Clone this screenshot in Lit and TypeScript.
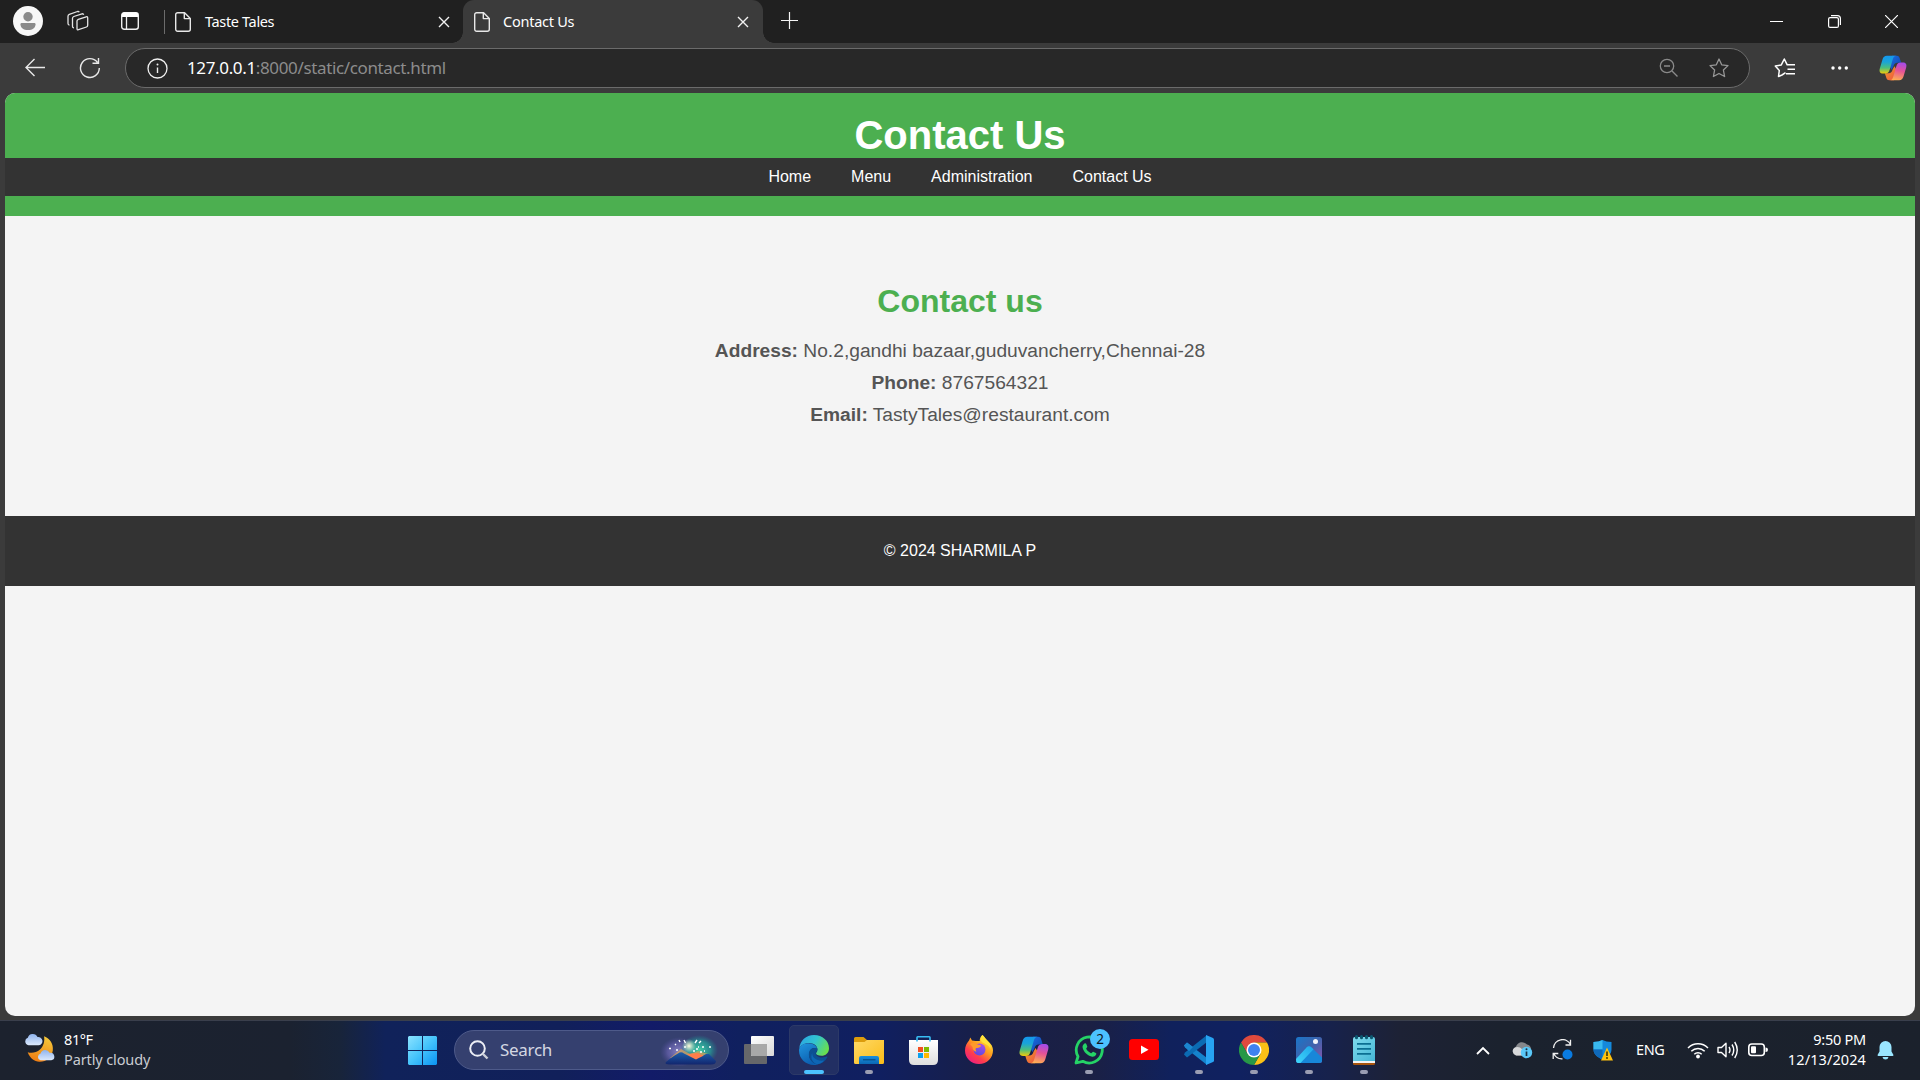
import { LitElement, html, css, svg } from "lit";
import { customElement } from "lit/decorators.js";

const icon = (w: number, h: number, body: unknown, cls = "") =>
  html`<svg class=${cls} width=${w} height=${h} viewBox="0 0 ${w} ${h}" fill="none">${body}</svg>`;

const pageIcon = () =>
  icon(18, 22, svg`<path d="M4 1.700H10.600L16.300 7.400V18.300a2 2 0 0 1-2 2H3.700a2 2 0 0 1-2-2V3.700a2 2 0 0 1 2-2ZM10.300 2V7.600H16" stroke="#e8e8e8" stroke-width="1.400" stroke-linejoin="round"/>`);

const crossIcon = () =>
  icon(12, 12, svg`<path d="M1 1L11 11M11 1L1 11" stroke="#f2f2f2" stroke-width="1.400"/>`);

const copilot = (w: number, h: number, k: string) => html`<svg width=${w} height=${h} viewBox="0 0 30 28" fill="none">
  <defs>
    <linearGradient id="l${k}" x1="0" y1="0" x2="0" y2="1"><stop stop-color="#1497ee"/><stop offset=".35" stop-color="#1aa4d8"/><stop offset=".68" stop-color="#4cbf7c"/><stop offset="1" stop-color="#f3cc08"/></linearGradient>
    <linearGradient id="r${k}" x1=".6" y1="0" x2=".4" y2="1"><stop stop-color="#a54be8"/><stop offset=".45" stop-color="#e55297"/><stop offset="1" stop-color="#ffae52"/></linearGradient>
    <linearGradient id="t${k}" x1="0" y1="0" x2="1" y2="1"><stop stop-color="#1a6fe8"/><stop offset="1" stop-color="#1244a8"/></linearGradient>
    <linearGradient id="b${k}" x1="0" y1="0" x2="1" y2="1"><stop stop-color="#f0a028"/><stop offset="1" stop-color="#ef4d43"/></linearGradient>
  </defs>
  <path d="M14 .8h5c2 0 2.800 1.200 3.400 3.200l1.400 4.400h-4c-2.600 0-3.600 1.200-4.400 4l-2 3.600L10 10Z" fill="url(#t${k})"/>
  <path d="M16 27.200h-5c-2 0-2.800-1.200-3.400-3.200L6.200 19.600h4c2.600 0 3.600-1.200 4.400-4l2-3.600L20 18Z" fill="url(#b${k})"/>
  <path d="M8.400 .8H18.400C16 1 15.300 2.800 14.600 5.200L11.400 16C10.500 19 9 20 6.500 20H4C.8 20 0 17.500 .8 14.600L3.600 5C4.500 2 6 .8 8.400 .8Z" fill="url(#l${k})"/>
  <path d="M21.600 27.200H11.600C14 27 14.700 25.200 15.400 22.800L18.600 12C19.500 9 21 8 23.500 8H26C29.200 8 30 10.500 29.200 13.400L26.400 23C25.500 26 24 27.200 21.600 27.200Z" fill="url(#r${k})"/>
</svg>`;

const weatherIcon = icon(30, 28, svg`
  <defs>
    <linearGradient id="moon" x1=".6" y1="0" x2=".3" y2="1"><stop stop-color="#f5c73a"/><stop offset="1" stop-color="#ee7c12"/></linearGradient>
    <linearGradient id="cld" x1="0" y1="0" x2="0" y2="1"><stop stop-color="#8fb4ee"/><stop offset="1" stop-color="#dce9fc"/></linearGradient>
  </defs>
  <path d="M19 2.300C25 4.500 28.600 10 27.800 16.500C26.800 23.500 21 28 14.300 27.700C9.500 27.400 5 24.500 2.700 18.200C6.500 19.500 11.500 18.700 15 15.500C18.600 12.200 20 7 19 2.300Z" fill="url(#moon)"/>
  <path d="M3.500 11.300A3.900 3.900 0 0 1 2.800 3.800 5.200 5.200 0 0 1 12.500 3 4.200 4.200 0 0 1 14 11.300Z" fill="url(#cld)"/>
  <path d="M15.500 26.300A3.600 3.600 0 0 1 15.600 19.400 4.900 4.900 0 0 1 24.600 18.800 3.800 3.800 0 0 1 26.300 26.300Z" fill="url(#cld)"/>`);

const startIcon = icon(29, 29, svg`
  <defs><linearGradient id="win" gradientUnits="userSpaceOnUse" x1="0" y1="0" x2="29" y2="29"><stop stop-color="#8ce3ff"/><stop offset=".5" stop-color="#44c3fb"/><stop offset="1" stop-color="#0a93f3"/></linearGradient></defs>
  <path d="M1 0H14V14H0V1ZM15 0H28L29 1V14H15ZM0 15H14V29H1L0 28ZM15 15H29V28L28 29H15Z" fill="url(#win)"/>`);

const searchArt = icon(58, 32, svg`
  <defs>
    <radialGradient id="g1"><stop stop-color="#a99de0" stop-opacity=".75"/><stop offset=".6" stop-color="#7c70c8" stop-opacity=".5"/><stop offset="1" stop-color="#5a50a8" stop-opacity="0"/></radialGradient>
    <radialGradient id="g2"><stop stop-color="#45d0a8"/><stop offset=".6" stop-color="#25a098" stop-opacity=".75"/><stop offset="1" stop-color="#208090" stop-opacity="0"/></radialGradient>
    <radialGradient id="g3"><stop stop-color="#fffbe0"/><stop offset="1" stop-color="#d8f0c8" stop-opacity="0"/></radialGradient>
    <linearGradient id="g4" x1="0" y1="0" x2="0" y2="1"><stop stop-color="#1d5fac"/><stop offset="1" stop-color="#12266e"/></linearGradient>
  </defs>
  <ellipse cx="19" cy="18" rx="19" ry="15" fill="url(#g1)"/>
  <ellipse cx="39" cy="16" rx="19" ry="15" fill="url(#g2)"/>
  <path d="M10 24L21 15 30 20 38 17 48 20 40 28 30 28Z" fill="#d3a15c" opacity=".75"/>
  <path d="M27 20L38 19 44 22 36 27Z" fill="#ff7d4a"/>
  <circle cx="29" cy="12" r="7" fill="url(#g3)"/>
  <path d="M6 28C10 24.500 14 21.500 18 19.500Q21 17 24 19.500L36 25.500Q43 22 46 20L49 20 56 27Q56 30.500 51 30.500H10Q4 30.500 6 28Z" fill="url(#g4)"/>
  <path d="M9 14.500h2M15 10l1 1M19 6l1 2M24 6l1.500 3M35 9l2-3M39 9l2-2M42 13h2M49 13h2M16 16h2M24 13h2M36 15h2M40 18h2M44 17h1M38 13h1M33 17h2" stroke="#fff" stroke-width="1.400"/>`);

const apps: { name: string; art: unknown; run?: boolean; active?: boolean; badge?: string }[] = [
  {
    name: "Task view",
    art: icon(30, 30, svg`
      <defs><linearGradient id="tv" x1="0" y1="0" x2="1" y2="1"><stop stop-color="#fff"/><stop offset="1" stop-color="#d8d8d8"/></linearGradient></defs>
      <rect y="9" width="23" height="20" rx="1" fill="#66676a"/><rect x="7" y="1" width="23" height="20" rx="1" fill="url(#tv)"/><path d="M7 9H23V21H8a1 1 0 0 1-1-1Z" fill="#a8a8a8"/>`),
  },
  {
    name: "Edge", run: true, active: true,
    art: icon(30, 30, svg`
      <defs>
        <linearGradient id="e1" x1="0" y1=".2" x2="1" y2=".6"><stop stop-color="#2ba5e4"/><stop offset=".5" stop-color="#31c4d0"/><stop offset="1" stop-color="#6adf4c"/></linearGradient>
        <linearGradient id="e2" x1="0" y1="0" x2=".5" y2="1"><stop stop-color="#2196df"/><stop offset="1" stop-color="#0b5fb0"/></linearGradient>
      </defs>
      <path d="M.3 13.500C1 5.500 7 0 15 0C23.500 0 30 6 30 13.200C30 18 26.500 20.800 22.500 20.800C19 20.800 17 19.500 17 18.300C17 17.500 18.500 17 18.500 14.500C18.500 10.800 14.500 8 10 8C5 8 1.500 10.500 .3 13.500Z" fill="url(#e1)"/>
      <path d="M0 15.500C0 11.500 4 8.200 9 8.200C14 8.200 18.200 11 18.400 14.500C16 11.700 11 13 10.200 18.500C9.500 24 14 28.500 19 29.400C17.700 29.800 16.500 30 15 30C6.500 30 0 23.500 0 15.500Z" fill="url(#e2)"/>
      <path d="M10 17.500C11 13.500 14.500 12.200 18.200 13.500C18.700 16.500 16.700 17 16.700 18.500C16.700 20.500 19.500 22.500 23.300 22.500C25.500 22.500 26.800 21.700 27.500 21.500C28.300 21.300 28.600 21.800 28.200 22.500C26 26.500 22.500 29 18.500 29.400C13 28.500 9 23.500 10 17.500Z" fill="#0c4f93"/>
      <path d="M13.200 18C13 22.500 17.500 26.500 25 25.500C23.500 27.500 21 29 18.500 29.300C13.500 28 11 23 13.200 18Z" fill="#0d66b5"/>`),
  },
  {
    name: "File Explorer", run: true,
    art: icon(30, 30, svg`
      <defs><linearGradient id="fx" x1="0" y1="0" x2="1" y2="1"><stop stop-color="#ffd966"/><stop offset="1" stop-color="#fbbc18"/></linearGradient><linearGradient id="fb" x1="0" y1="0" x2="0" y2="1"><stop stop-color="#1a8fdf"/><stop offset="1" stop-color="#0b67b4"/></linearGradient></defs>
      <path d="M0 3.500Q0 2 1.500 2H9.500L13 5H28.500Q30 5 30 6.500V10H0Z" fill="#dc9c0c"/>
      <path d="M0 7H10.500L13 5H30V27.500Q30 29 28.500 29H1.500Q0 29 0 27.500Z" fill="url(#fx)"/>
      <path d="M5 29V23Q5 21 7 21H23Q25 21 25 23V29Z" fill="url(#fb)"/><path d="M9 24.800H21.500" stroke="#084b86" stroke-width="1.200"/>`),
  },
  {
    name: "Store",
    art: icon(30, 30, svg`
      <defs><linearGradient id="st" x1="0" y1="0" x2="0" y2="1"><stop stop-color="#fff"/><stop offset="1" stop-color="#dedede"/></linearGradient></defs>
      <path d="M0 5H29V25Q29 30 24 30H5Q0 30 0 25Z" fill="url(#st)"/>
      <path d="M8 6.500V2.500Q8 1.800 8.700 1.800H20.300Q21 1.800 21 2.500V6.500" stroke="#38bdf3" stroke-width="1.600"/>
      <path d="M9 12H14V17H9Z" fill="#f25022"/><path d="M15 12H20V17H15Z" fill="#7fba00"/><path d="M9 18H14V23H9Z" fill="#0aa0ee"/><path d="M15 18H20V23H15Z" fill="#ffb900"/>`),
  },
  {
    name: "Firefox",
    art: icon(30, 30, svg`
      <defs>
        <linearGradient id="f1" x1=".8" y1=".1" x2=".2" y2=".95"><stop stop-color="#ffe838"/><stop offset=".4" stop-color="#ff9a1f"/><stop offset=".7" stop-color="#ff3d4c"/><stop offset="1" stop-color="#ed1f80"/></linearGradient>
        <linearGradient id="f2" x1=".7" y1="0" x2=".3" y2="1"><stop stop-color="#a94de8"/><stop offset="1" stop-color="#5a4be0"/></linearGradient>
      </defs>
      <path d="M18.500 0C20.500 2 22 4.500 24 6.200C27.500 9 29 12 29 15.200C29 23 23 29 15 29C7 29 1 23 1 15.500C1 11 2.800 8 5.200 5.200L6.300 2.500 8 5.500 11.500 6 15.800 6C15.500 3.500 16.500 1.500 18.500 0Z" fill="url(#f1)"/>
      <circle cx="15.500" cy="14.500" r="6" fill="url(#f2)"/>
      <path d="M6 9C8 7.500 11.500 8 13.500 9.500L17 10.300C17 12 15 13 13 13C11 13 11.500 15 12.500 16.500C9.500 16.500 8.500 14 8.600 12Z" fill="#ff9a2c"/>
      <path d="M18.500 0C20.500 2 22 4.500 24 6.200C26 8 27 10 26.500 14C25 10 21 9 18.500 7.500C16 5.500 16.500 2 18.500 0Z" fill="#ffe23a"/>`),
  },
  { name: "Copilot", art: copilot(30, 28, "b") },
  {
    name: "WhatsApp", run: true, badge: "2",
    art: icon(30, 30, svg`
      <path d="M2 28L4 21.500A13 13 0 1 1 8.800 26.300Z" stroke="#25d366" stroke-width="2.800" stroke-linejoin="round"/>
      <path d="M10.500 8.500C11.300 8 12 8.300 12.300 9L13.300 11.500C13.500 12.200 12 13.300 12.200 13.800C13.200 15.800 14.800 17.300 17 18.200C17.700 18.400 18.600 16.500 19.300 16.800L21.800 18C22.500 18.400 22.400 19 22 19.800C21.300 21.400 19.200 22 17.500 21.500C13 20.300 9.800 17 8.700 13C8.200 11.300 8.900 9.500 10.500 8.500Z" fill="#25d366"/>`),
  },
  {
    name: "YouTube",
    art: icon(30, 30, svg`<rect y="4" width="30" height="21" rx="3.500" fill="#f00"/><path d="M12 10.500V19L19.500 14.750Z" fill="#fff"/>`),
  },
  {
    name: "VS Code", run: true,
    art: icon(30, 30, svg`
      <path d="M0 10.500L3 7.500 23 23V30L1 12.500Z" fill="#1583cc"/><path d="M0 19.500L3 22.500 23 7V0L1 17.500Z" fill="#0b6bb3"/>
      <path d="M0 10.500L3 7.500 9 12 5 16.200Z" fill="#1c86cf"/>
      <path d="M22 0L29 3Q30 3.500 30 4.500V25.500Q30 26.500 29 27L22 30Z" fill="#27a3f2"/>`),
  },
  {
    name: "Chrome", run: true,
    art: icon(30, 30, svg`
      <path d="M2 7.500A15 15 0 0 1 28 7.500H15L8.500 18.700Z" fill="#df4a3d"/>
      <path d="M28 7.500A15 15 0 0 1 15 30L21.500 18.700 15 7.500Z" fill="#fbc116"/>
      <path d="M15 30A15 15 0 0 1 2 7.500L8.500 18.700 15 22.500 21.500 18.700Z" fill="#279847"/>
      <circle cx="15" cy="15" r="7.500" fill="#fff"/><circle cx="15" cy="15" r="6" fill="#3e82f0"/>`),
  },
  {
    name: "Photos", run: true,
    art: icon(30, 30, svg`
      <defs>
        <linearGradient id="p1" x1="0" y1="0" x2="1" y2="1"><stop stop-color="#1976c9"/><stop offset=".5" stop-color="#3f62ac"/><stop offset="1" stop-color="#8d55ad"/></linearGradient>
        <linearGradient id="p2" x1="0" y1="1" x2="1" y2="0"><stop stop-color="#3fd6fb"/><stop offset="1" stop-color="#1fa6ea"/></linearGradient>
      </defs>
      <rect x="2" y="2" width="26" height="26" rx="2.500" fill="url(#p1)"/>
      <path d="M2.700 27L13 12Q15 10.300 17 12L28 22.500V25.500Q28 28 25.500 28H4.500Q3 28 2.700 27Z" fill="#1787d9"/>
      <path d="M2.300 26.800L2 24 13 12Q15 10.300 17 12L19.500 14.300 6.500 28H4.500Q3 28 2.300 26.800Z" fill="url(#p2)"/>
      <circle cx="21.500" cy="6.500" r="2.500" fill="#f1f4fb"/>`),
  },
  {
    name: "Notepad", run: true,
    art: icon(30, 30, svg`
      <defs><linearGradient id="np" x1="0" y1="0" x2="1" y2="1"><stop stop-color="#7fdcee"/><stop offset="1" stop-color="#45b6d6"/></linearGradient></defs>
      <path d="M4 26H26V28.500Q26 30 24.500 30H5.500Q4 30 4 28.500Z" fill="#a8540c"/><path d="M4 24H26V28H4Z" fill="#f3f3f3"/><path d="M4 4Q4 2 6 2H24Q26 2 26 4V26H4Z" fill="url(#np)"/>
      <path d="M8 8.800H22M8 13.800H22M8 18.800H22" stroke="#0b6f92" stroke-width="1.800"/>
      <path d="M7.500 1.500V2.800M12.500 1.500V2.800M17.500 1.500V2.800M22.500 1.500V2.800" stroke="#0c5870" stroke-width="3" stroke-linecap="round"/>`),
  },
];

@customElement("browser-chrome")
class BrowserChrome extends LitElement {
  static styles = css`
    :host { display: block; font-family: "Noto Sans", "Open Sans", sans-serif; color: #fff; background: #3b3b3b; }
    svg { display: block; flex: none; }
    .strip { height: 43px; box-sizing: border-box; background: #202020; display: flex; align-items: center; padding-left: 13px; }
    .strip > svg { margin-bottom: 1px; }
    .workspaces { margin-left: 24px; }
    .actions { margin-left: 31px; }
    .sep { width: 1px; height: 24px; margin-left: 24px; background: #6c6c6c; }
    .tab { height: 43px; box-sizing: border-box; display: flex; align-items: center; font-size: 14.5px; letter-spacing: -0.3px; }
    .tab span { flex: 1; margin: -2px 0 0 13px; }
    .first { width: 298px; padding: 0 13px 0 9px; letter-spacing: -0.35px; }
    .current { width: 300px; padding: 0 14px 0 10px; background: #3b3b3b; border-radius: 11px 11px 0 0; position: relative; }
    .current span { margin-left: 12px; letter-spacing: -0.25px; }
    .current::before, .current::after { content: ""; position: absolute; bottom: 0; width: 11px; height: 11px; }
    .current::before { left: -11px; background: radial-gradient(circle at 0 0, transparent 10.5px, #3b3b3b 11px); }
    .current::after { right: -11px; background: radial-gradient(circle at 100% 0, transparent 10.5px, #3b3b3b 11px); }
    .plus { margin-left: 17px; }
    .controls { margin-left: auto; padding-right: 22px; display: flex; gap: 44.500px; align-items: center; }
    .bar { height: 50px; display: flex; align-items: center; padding-left: 24px; }
    .reload { margin-left: 33px; }
    .url { flex: none; margin-left: 24px; width: 1625px; height: 40px; box-sizing: border-box; border: 1px solid #6b6b6b; border-radius: 20px; background: #282828; display: flex; align-items: center; padding: 0 20px 0 21px; font-size: 17px; letter-spacing: -0.36px; color: #8c8c8c; }
    .url b { font-weight: 400; color: #fff; }
    .address { flex: 1; margin: -2px 0 0 19px; }
    .star { margin-left: 30px; }
    .fav { margin-left: 24px; }
    .dots { margin-left: 35px; }
    .copilot { margin: 0 0 0 30px; }
  `;
  render() {
    return html`
      <div class="strip">
        ${icon(30, 30, svg`<circle cx="15" cy="15" r="15" fill="#f7f7f7"/><circle cx="15" cy="10.700" r="4.700" fill="#8a8a8a"/><path d="M8.500 17H21.500Q22.500 17 22.500 18.200C22.500 21.800 19.500 24 15 24S7.500 21.800 7.500 18.200Q7.500 17 8.500 17Z" fill="#8a8a8a"/>`)}
        ${icon(22, 22, svg`<g stroke="#e4e4e4" stroke-width="1.300" stroke-linejoin="round"><path d="M11.300 9.300Q10 9.800 10 11V18.500Q10 20.200 11.500 19.700L19.500 17Q20.700 16.600 20.700 15.300V8Q20.700 6.300 19.200 6.800Z"/><path d="M7 17.800Q5.500 17.800 5.500 16.200V8.300Q5.500 7 6.800 6.500L15 3.800Q16.300 3.500 16.700 4.800"/><path d="M2.500 15.200Q1 15 1 13.500V6.200Q1 4.800 2.300 4.300L10.500 1.500Q11.800 1.200 12.200 2.300"/></g>`, "workspaces")}
        ${icon(20, 20, svg`<rect x="1.700" y="1.700" width="16.600" height="16.600" rx="2.500" stroke="#f0f0f0" stroke-width="1.400"/><path d="M2 3Q2 1.500 4 1.500H16Q18 1.500 18 3V6H2Z" fill="#fff"/><path d="M6.500 6V18" stroke="#f0f0f0" stroke-width="1.300"/>`, "actions")}
        <div class="sep"></div>
        <div class="tab first">${pageIcon()}<span>Taste Tales</span>${crossIcon()}</div>
        <div class="tab current">${pageIcon()}<span>Contact Us</span>${crossIcon()}</div>
        ${icon(18, 18, svg`<path d="M9.500 0V17M1 8.500H18" stroke="#f5f5f5" stroke-width="1.200"/>`, "plus")}
        <div class="controls">
          ${icon(13, 13, svg`<path d="M0 6.500H13" stroke="#fff" stroke-width="1"/>`)}
          ${icon(13, 13, svg`<rect x=".6" y="2.600" width="9.800" height="9.800" rx="1.500" stroke="#fff" stroke-width="1.200"/><path d="M3 .6H9.500Q12.400 .6 12.400 3.500V10" stroke="#fff" stroke-width="1.200"/>`)}
          ${icon(13, 13, svg`<path d="M0 0L13 13M13 0L0 13" stroke="#fff" stroke-width="1.200"/>`)}
        </div>
      </div>
      <div class="bar">
        ${icon(22, 22, svg`<path d="M21 10.500H2M10.500 2L2 10.500 10.500 19" stroke="#e8e8e8" stroke-width="1.400"/>`)}
        ${icon(22, 22, svg`<path d="M18.500 5.500A9.400 9.400 0 1 0 20.300 11M19.500 1V6.300H13.500" stroke="#e8e8e8" stroke-width="1.400"/>`, "reload")}
        <div class="url">
          ${icon(21, 21, svg`<circle cx="10.500" cy="10.500" r="9.500" stroke="#f0f0f0" stroke-width="1.300"/><path d="M10.500 9.500V15" stroke="#f0f0f0" stroke-width="1.400"/><circle cx="10.500" cy="6.500" r="1" fill="#f0f0f0"/>`)}
          <span class="address"><b>127.0.0.1</b>:8000/static/contact.html</span>
          ${icon(20, 20, svg`<circle cx="8" cy="8" r="6.700" stroke="#8a8a8a" stroke-width="1.300"/><path d="M5 8H11M13 13L18.500 18.500" stroke="#8a8a8a" stroke-width="1.400"/>`)}
          ${icon(20, 20, svg`<path d="M10 1L12.700 6.800 19 7.600 14.400 12 15.600 18.500 10 15.500 4.400 18.500 5.600 12 1 7.600 7.300 6.800Z" stroke="#979797" stroke-width="1.300" stroke-linejoin="round"/>`, "star")}
        </div>
        ${icon(22, 22, svg`<path d="M8 18L4.500 19.500 5.300 13.500 1.300 9 7.300 7.900 10.300 2 13.200 7.800H21M13.500 12.300H21M12 16.800H21M8 18L11.500 15.700" stroke="#fff" stroke-width="1.500" stroke-linejoin="round"/>`, "fav")}
        ${icon(18, 4, svg`<circle cx="2" cy="2" r="1.700" fill="#fff"/><circle cx="8.700" cy="2" r="1.700" fill="#fff"/><circle cx="15.300" cy="2" r="1.700" fill="#fff"/>`, "dots")}
        <div class="copilot">${copilot(28, 26, "a")}</div>
      </div>
    `;
  }
}

@customElement("contact-page")
class ContactPage extends LitElement {
  static styles = css`
    :host { display: block; background: #f4f4f4; font-family: Arial, "Liberation Sans", sans-serif; text-align: center; border-radius: 10px; overflow: hidden; }
    .head { background: #4caf50; padding: 20px 0; color: #fff; }
    h1 { margin: 0; font-size: 40px; line-height: 45px; }
    nav { background: #333; padding: 10px 0; display: flex; justify-content: center; gap: 40px; font-size: 16px; line-height: 18px; }
    .info { height: 300px; box-sizing: border-box; padding-top: 67px; color: #555; }
    h2 { margin: 0 0 15px; font-size: 32px; line-height: 37px; color: #4caf50; }
    p { margin: 0; font-size: 19.2px; line-height: 32px; }
    footer { height: 70px; background: #333; color: #fff; display: flex; align-items: center; justify-content: center; font-size: 16px; line-height: 18px; }
  `;
  render() {
    return html`
      <div class="head">
        <h1>Contact Us</h1>
        <nav><span>Home</span><span>Menu</span><span>Administration</span><span>Contact Us</span></nav>
      </div>
      <div class="info">
        <h2>Contact us</h2>
        <p><strong>Address:</strong> No.2,gandhi bazaar,guduvancherry,Chennai-28</p>
        <p><strong>Phone:</strong> 8767564321</p>
        <p><strong>Email:</strong> TastyTales@restaurant.com</p>
      </div>
      <footer>© 2024 SHARMILA P</footer>
    `;
  }
}

@customElement("task-bar")
class TaskBar extends LitElement {
  static styles = css`
    :host { display: flex; align-items: center; height: 60px; box-sizing: border-box; padding-bottom: 1px; border-top: 1px solid #3a3f4c; color: #fff; font-family: "Noto Sans", "Open Sans", sans-serif; font-size: 14.5px;
      background: linear-gradient(90deg, #1c222e 0, #1b2230 290px, #18243a 340px, #10225a 385px, #11205a 560px, #121b68 650px, #10205f 740px, #101f60 880px, #181f48 980px, #1b2044 1090px, #10215c 1170px, #102160 1240px, #17224c 1330px, #1d2235 1400px, #1b222e 1500px, #1b212c 1920px); }
    svg { display: block; flex: none; }
    .weather { width: 408px; box-sizing: border-box; padding-left: 25px; display: flex; align-items: center; gap: 9px; line-height: 20px; letter-spacing: -0.4px; }
    .weather > div { margin-top: -2px; }
    .weather .desc { color: #c9ccd2; letter-spacing: -0.12px; }
    .weather svg { margin-top: -4px; }
    .search { margin-left: 17px; width: 275px; height: 40px; box-sizing: border-box; border: 1px solid #4e5a8a; border-radius: 20px; background: #35406f; display: flex; align-items: center; padding: 0 10px 0 14px; font-size: 17px; letter-spacing: -0.3px; color: #d4d7e2; }
    .search span { flex: 1; margin: -1px 0 0 11px; }
    .apps { display: flex; margin-left: 2px; }
    .app { position: relative; width: 55px; height: 50px; display: flex; align-items: center; justify-content: center; }
    .app.active::before { content: ""; position: absolute; left: 2.5px; top: 0; width: 50px; height: 50px; box-sizing: border-box; border: 1px solid #2c3967; border-radius: 5px; background: #222f63; }
    .app svg { position: relative; }
    .app.run::after { content: ""; position: absolute; bottom: 1px; left: 23.5px; width: 8px; height: 4px; border-radius: 2px; background: #9a9db2; }
    .app.active::after { left: 17.5px; width: 20px; background: #4cc2ff; }
    .badge { position: absolute; top: 4px; left: 29px; width: 20px; height: 20px; border-radius: 50%; background: #4cc2ff; color: #10151c; font-size: 13.5px; line-height: 20px; text-align: center; }
    .tray { margin-left: auto; padding-right: 26px; display: flex; align-items: center; }
    .sp1 { margin-left: 21px; } .sp2 { margin-left: 19px; } .sp3 { margin-left: 19px; }
    .lang { width: 29px; margin: -2px 0 0 23px; letter-spacing: -0.4px; }
    .wifi { margin-left: 22px; } .gap { margin-left: 8px; }
    .clock { width: 97px; margin-top: -3px; text-align: right; line-height: 20px; letter-spacing: -0.25px; }
    .date { letter-spacing: 0.1px; }
    .bell { margin-left: 11px; }
  `;
  render() {
    return html`
      <div class="weather">${weatherIcon}<div><div>81°F</div><div class="desc">Partly cloudy</div></div></div>
      ${startIcon}
      <div class="search">
        ${icon(20, 20, svg`<circle cx="8.500" cy="8.500" r="7.300" stroke="#eceef5" stroke-width="2"/><path d="M13.500 13.500L18.500 18.500" stroke="#cdd0da" stroke-width="2.400"/>`)}
        <span>Search</span>${searchArt}
      </div>
      <div class="apps">
        ${apps.map(a => html`<div class="app ${a.run ? "run" : ""} ${a.active ? "active" : ""}" aria-label=${a.name}>${a.art}${a.badge ? html`<div class="badge">${a.badge}</div>` : ""}</div>`)}
      </div>
      <div class="tray">
        ${icon(14, 9, svg`<path d="M1 8L7 2 13 8" stroke="#fff" stroke-width="1.800"/>`)}
        ${icon(22, 20, svg`<path d="M5.500 15.500A5 5 0 0 1 5 6.500 6.500 6.500 0 0 1 16 4.500 5 5 0 0 1 20 9L12 15.500Z" fill="#85878b"/><path d="M5 15.500A4.300 4.300 0 0 1 4 7.500Q8 6 11.500 9.500L15 15.500Z" fill="#d7d8da"/><circle cx="15.500" cy="12.500" r="5.700" fill="#5ac8f8"/><path d="M15.500 11.500V16" stroke="#173044" stroke-width="1.700"/><circle cx="15.500" cy="9.300" r="1" fill="#173044"/>`, "sp1")}
        ${icon(22, 22, svg`<path d="M1.500 9A9 9 0 0 1 18.500 5.500M18.500 .8V6H13.500M1.200 20V14.500H6.300M1.800 14.800A9 9 0 0 0 10.500 19.800" stroke="#f0f0f0" stroke-width="1.300"/><circle cx="15.500" cy="15.500" r="5" fill="#0a7be0"/>`, "sp2")}
        ${icon(20, 22, svg`<path d="M9.500 1Q13 3 18.500 3V10.500C18.500 15.500 14 18.500 9.500 20.500C5 18.500 .5 15.500 .5 10.500V3Q6 3 9.500 1Z" fill="#1489dc"/><path d="M9.500 1Q6 3 .5 3V10.500H9.500Z" fill="#39baf0"/><path d="M9.500 10.500H.5C.5 15.500 5 18.500 9.500 20.500Z" fill="#0f69ba"/><path d="M14 8.500L20 21.500H8Z" fill="#ffc20e"/><path d="M14 12.500V17" stroke="#332b00" stroke-width="1.500"/><circle cx="14" cy="19" r=".9" fill="#332b00"/>`, "sp3")}
        <span class="lang">ENG</span>
        ${icon(22, 18, svg`<path d="M1 7A14 14 0 0 1 21 7M4.300 10.200A9.500 9.500 0 0 1 17.700 10.200M7.300 13.200A5.300 5.300 0 0 1 14.700 13.200" stroke="#fff" stroke-width="1.500"/><circle cx="11" cy="15.500" r="1.900" fill="#fff"/>`, "wifi")}
        ${icon(22, 20, svg`<path d="M1 7.500H4.500L9 3.300V16.700L4.500 12.500H1Z" stroke="#fff" stroke-width="1.400" stroke-linejoin="round"/><path d="M12 7Q14 10 12 13M15 4.500Q18.500 10 15 15.500M17.700 2Q22.800 10 17.700 18" stroke="#fff" stroke-width="1.400"/>`, "gap")}
        ${icon(22, 16, svg`<rect x="1.800" y="2" width="15.500" height="11.500" rx="3" stroke="#fff" stroke-width="1.600"/><rect x="4" y="4.300" width="5" height="7" rx="1" fill="#fff"/><path d="M18.500 5.500Q21 5.500 21 7.800T18.500 10Z" fill="#fff"/>`, "gap")}
        <div class="clock"><div>9:50 PM</div><div class="date">12/13/2024</div></div>
        ${icon(17, 20, svg`<path d="M8.500 1A6 6 0 0 1 14.500 7V11.500L16.500 15Q16.500 16 15.500 16H1.500Q.5 16 .5 15L2.500 11.500V7A6 6 0 0 1 8.500 1ZM5.500 17H11.500Q11 19.500 8.500 19.500T5.500 17Z" fill="#9ae6ff"/>`, "bell")}
      </div>
    `;
  }
}

@customElement("app-root")
class AppRoot extends LitElement {
  static styles = css`
    :host { display: flex; flex-direction: column; width: 1920px; height: 1080px; background: #3b3b3b; overflow: hidden; }
    contact-page { height: 922.5px; margin: 0 5px; }
    task-bar { margin-top: auto; }
  `;
  render() {
    return html`<browser-chrome></browser-chrome><contact-page></contact-page><task-bar></task-bar>`;
  }
}
